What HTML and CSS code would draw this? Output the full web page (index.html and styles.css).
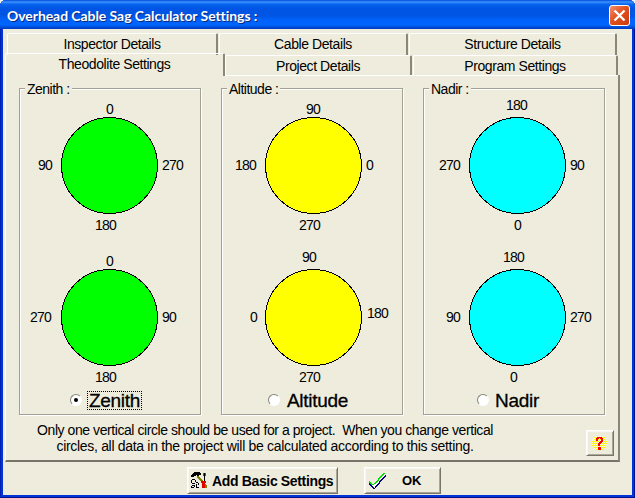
FILE: index.html
```html
<!DOCTYPE html>
<html lang="en">
<head>
<meta charset="utf-8">
<title>Overhead Cable Sag Calculator Settings</title>
<link rel="stylesheet" href="styles.css">
</head>
<body>
<main class="window">
  <header class="titlebar">
    <h1>Overhead Cable Sag Calculator Settings :</h1>
    <button class="close" aria-label="Close"><svg width="19" height="19" viewBox="0 0 19 19"><path d="M4.500 4.500l10 10M14.500 4.500l-10 10" stroke="#fff" stroke-width="2.400"/></svg></button>
  </header>
  <div class="client">
    <nav class="tabs back">
      <span class="tab">Inspector Details</span><span class="tab">Cable Details</span><span class="tab">Structure Details</span>
    </nav>
    <nav class="tabs front">
      <span class="tab active">Theodolite Settings</span><span class="tab">Project Details</span><span class="tab">Program Settings</span>
    </nav>
    <section class="panel">
      <div class="groups">
        <div class="group zenith">
          <h2>Zenith :</h2>
          <svg class="dial" width="180" height="152"><circle cx="89.500" cy="70.500" r="48"/><text x="86" y="19">0</text><text x="18" y="75">90</text><text x="142" y="75">270</text><text x="75" y="135">180</text></svg>
          <svg class="dial" width="180" height="142"><circle cx="89.500" cy="70.500" r="48"/><text x="86" y="19">0</text><text x="10" y="75">270</text><text x="142" y="75">90</text><text x="75" y="135">180</text></svg>
          <label class="choice"><i class="radio on"></i><span class="focus">Zenith</span></label>
        </div>
        <div class="group altitude">
          <h2>Altitude :</h2>
          <svg class="dial" width="180" height="152"><circle cx="91.500" cy="70.500" r="48"/><text x="84" y="19">90</text><text x="13" y="75">180</text><text x="144" y="75">0</text><text x="77" y="135">270</text></svg>
          <svg class="dial" width="180" height="142"><circle cx="91.500" cy="70.500" r="48"/><text x="80" y="15">90</text><text x="28" y="75">0</text><text x="145" y="71">180</text><text x="77" y="135">270</text></svg>
          <label class="choice"><i class="radio"></i><span>Altitude</span></label>
        </div>
        <div class="group nadir">
          <h2>Nadir :</h2>
          <svg class="dial" width="180" height="152"><circle cx="93.500" cy="70.500" r="48"/><text x="82" y="15">180</text><text x="15" y="75">270</text><text x="146" y="75">90</text><text x="90" y="135">0</text></svg>
          <svg class="dial" width="180" height="142"><circle cx="93.500" cy="70.500" r="48"/><text x="79" y="15">180</text><text x="22" y="75">90</text><text x="146" y="75">270</text><text x="86" y="135">0</text></svg>
          <label class="choice"><i class="radio"></i><span>Nadir</span></label>
        </div>
      </div>
      <div class="foot">
        <p><span class="first">Only one vertical circle should be used for a project.&nbsp; When you change vertical</span><br>circles, all data in the project will be calculated according to this setting.</p>
        <button class="btn help" aria-label="Help">
          <svg width="18" height="18" viewBox="0 0 18 18" shape-rendering="crispEdges"><defs><pattern id="dots" width="2" height="2" patternUnits="userSpaceOnUse"><path fill="#ff0" d="M0 0h1v1H0zM1 1h1v1H1z"/><path fill="#fffbe6" d="M1 0h1v1H1zM0 1h1v1H0z"/></pattern></defs><circle cx="8.500" cy="9" r="7.500" fill="url(#dots)"/><path fill="#f00" d="M6 3h5v1h1v4h-1v1h-1v1h-1v2H7V9h1V8h1V7h1V5H9V4H8v1H7v2H5V4h1zM7 13h3v3H7z"/></svg>
        </button>
      </div>
    </section>
    <footer class="actions">
      <button class="btn add">
        <svg width="17" height="17" viewBox="0 0 17 17" shape-rendering="crispEdges"><path fill="#000" d="M3 0h6v1h1v2H8v1H6V3H5v1H3v1H0V3h1V2h1V1h1zM13 1h1v8h-1z"/><path fill="#555" d="M12 1h1v3h-1zM14 1h1v3h-1z"/><path fill="#808000" d="M6 4h2v1h1v1h1v1h1v1h1v1h1v2h1v1h1v1h1v3h-2v-2h-1v-1h-1v-2h-1v-1h-1V9H9V8H8V7H7V6H6z"/><path d="M1 7.500h3M.5 8v3M1 11.500h3M4.500 8v2M5 10.500h2M7.500 11v2M5.500 12v4M1 13.500h3M.5 14v2M1 15.500h2M3.500 14v1M5 15.500h3" fill="none" stroke="#000"/><path fill="#e00000" d="M10 9h5v2h-1v5h-3v-5h-1z"/></svg>
        <span>Add Basic Settings</span>
      </button>
      <button class="btn ok">
        <svg width="17" height="16" viewBox="0 0 17 16" shape-rendering="crispEdges"><path fill="#fff" d="M1 9l4 4 11-12v3L6 15z"/><path fill="none" stroke="#000080" d="M0 10.500h1M0 11.500h2M1 12.500h2M2 13.500h2M3 14.500h2M4 15.500h2M6 14.500h1M6 13.500h2M7 12.500h2M8 11.500h2M9 10.500h2M10 9.500h1M10 8.500h2M11 7.500h2M12 6.500h2M13 5.500h2M14 4.500h2M15 3.500h2M16 2.500h1"/><path fill="none" stroke="#00e000" d="M0 8.500h1M0 9.500h2M1 10.500h2M2 11.500h3M5 10.500h2M6 9.500h2M7 8.500h2M8 7.500h2M9 6.500h1M9 5.500h2M10 4.500h2M11 3.500h2M12 2.500h2M13 1.500h2M14 .5h2"/></svg>
        <span>OK</span>
      </button>
    </footer>
  </div>
</main>
</body>
</html>
```

FILE: styles.css
```css
* { box-sizing: border-box; }
body { margin: 0; background: #f4f3ea; font: 14px/16px "Liberation Sans", Arial, sans-serif; color: #000; }
h1, h2, p { margin: 0; font-weight: normal; }
button { margin: 0; padding: 0; font: inherit; color: inherit; }

.window {
  width: 635px; height: 498px; display: flex; flex-direction: column;
  padding: 0 3px 3px; border-radius: 6px 6px 0 0; overflow: hidden;
  background: #0034d6;
  box-shadow: inset 1px 0 #0020b0, inset -1px 0 #001090, inset 0 -1px #001090;
}
.titlebar {
  flex: 0 0 29px; margin: 0 -3px; padding: 1px 5px 0 7px;
  display: flex; align-items: center; justify-content: space-between;
  background: linear-gradient(#0048d8 0, #3d95ff 2px, #0a66f0 4px, #0055e5 8px, #0054e3 15px, #0062fa 20px, #0066ff 25px, #004fd8 27px, #0038c0 29px);
}
.titlebar h1 { font: bold 14px/20px Lato, sans-serif; color: #fff; text-shadow: 1px 1px #0a2a80; white-space: nowrap; letter-spacing: -0.07px; padding-top: 1px; }
.close { width: 21px; height: 21px; border: 1px solid #fff; border-radius: 3px; background: linear-gradient(135deg, #f09070, #e4501e 45%, #c83c10); display: grid; place-items: center; }

.client {
  flex: 1; display: flex; flex-direction: column; padding: 4px 12px 0 2px;
  background-color: #eeeddd;
  background-image: radial-gradient(circle at 1.5px 1.5px, #f4e3d6 0.7px, transparent 0.8px), radial-gradient(circle at 5.5px 5.5px, #e7ebd6 0.7px, transparent 0.8px);
  background-size: 8px 8px;
}
.tabs { display: grid; }
.tab { text-align: center; white-space: nowrap; letter-spacing: -0.42px; border-top: 1px solid #fff; border-left: 1px solid #fff; border-right: 2px solid #89877a; border-radius: 2px 2px 0 0; line-height: 21px; }
.back { grid-template-columns: 212px 190px 209px; height: 20px; padding-left: 2px; }
.back .tab { margin-right: 1px; }
.front { grid-template-columns: 220px 188px 206px; height: 22px; align-items: end; }
.front .tab { height: 21px; margin-right: 1px; line-height: 20px; }
.front .active { height: 23px; margin-right: 0; }

.panel {
  width: 615px; height: 387px; padding: 8px 0 0 13px; display: flex; flex-direction: column;
  border: solid; border-width: 0 2px 2px 1px; border-color: #fff #89877a #77756a #fff;
  background: linear-gradient(#fff, #fff) 219px 0 / 395px 1px no-repeat;
}
.groups { display: flex; gap: 20px; }
.group {
  width: 182px; height: 327px; margin-top: 5px; border: 1px solid #a3a193;
  box-shadow: 1px 1px #fff, inset 1px 1px #fff; display: flex; flex-direction: column;
}
.group h2 { align-self: flex-start; margin: -8px 0 0 5px; padding: 0 2px; height: 15px; background: #eeeddd; letter-spacing: -0.5px; line-height: 17px; font-size: 14px; }
.dial { display: block; flex: none; font-size: 14px; letter-spacing: -0.8px; margin-top: -1px; }
.dial + .dial { margin-top: 0; }
.dial circle { stroke: #000; stroke-width: 1; shape-rendering: crispEdges; }
.zenith circle { fill: #0f0; }
.altitude circle { fill: #ff0; }
.nadir circle { fill: #0ff; }
.choice { display: flex; align-items: center; height: 22px; font-size: 19px; line-height: 17px; letter-spacing: -0.3px; padding-left: 50px; -webkit-text-stroke: 0.3px #000; }
.altitude .choice { padding-left: 46px; }
.nadir .choice { padding-left: 53px; }
.choice span { margin-left: 6px; padding: 0 1px; }
.nadir .choice span { margin-left: 5px; }
.focus { outline: 1px dotted #000; }
.radio { width: 12px; height: 12px; border-radius: 50%; background: #fff; border: 1.500px solid; border-color: #85837a #fff #fff #85837a; display: grid; place-items: center; }
.radio.on::after { content: ""; width: 4px; height: 4px; border-radius: 50%; background: #000; }
.foot { display: flex; justify-content: space-between; padding: 6px 4px 0 0; }
.foot p { width: 492px; text-align: center; letter-spacing: -0.31px; white-space: nowrap; padding-top: 1px; }
.first { letter-spacing: -0.43px; }

.btn { display: flex; align-items: center; background: none; border: 1px solid; border-color: #fff #77756a #77756a #fff; box-shadow: inset 1px 1px #f8f8f0, inset -1px -1px #a9a798; }
.help { width: 28px; height: 26px; margin-top: 9px; justify-content: center; }
.actions { display: flex; gap: 26px; padding: 5px 0 0 182px; }
.actions .btn { height: 27px; font-weight: bold; }
.add { width: 151px; padding-left: 3px; gap: 4px; letter-spacing: -0.35px; white-space: nowrap; }
.ok { width: 77px; padding-left: 4px; gap: 16px; font-size: 13px; }
```
